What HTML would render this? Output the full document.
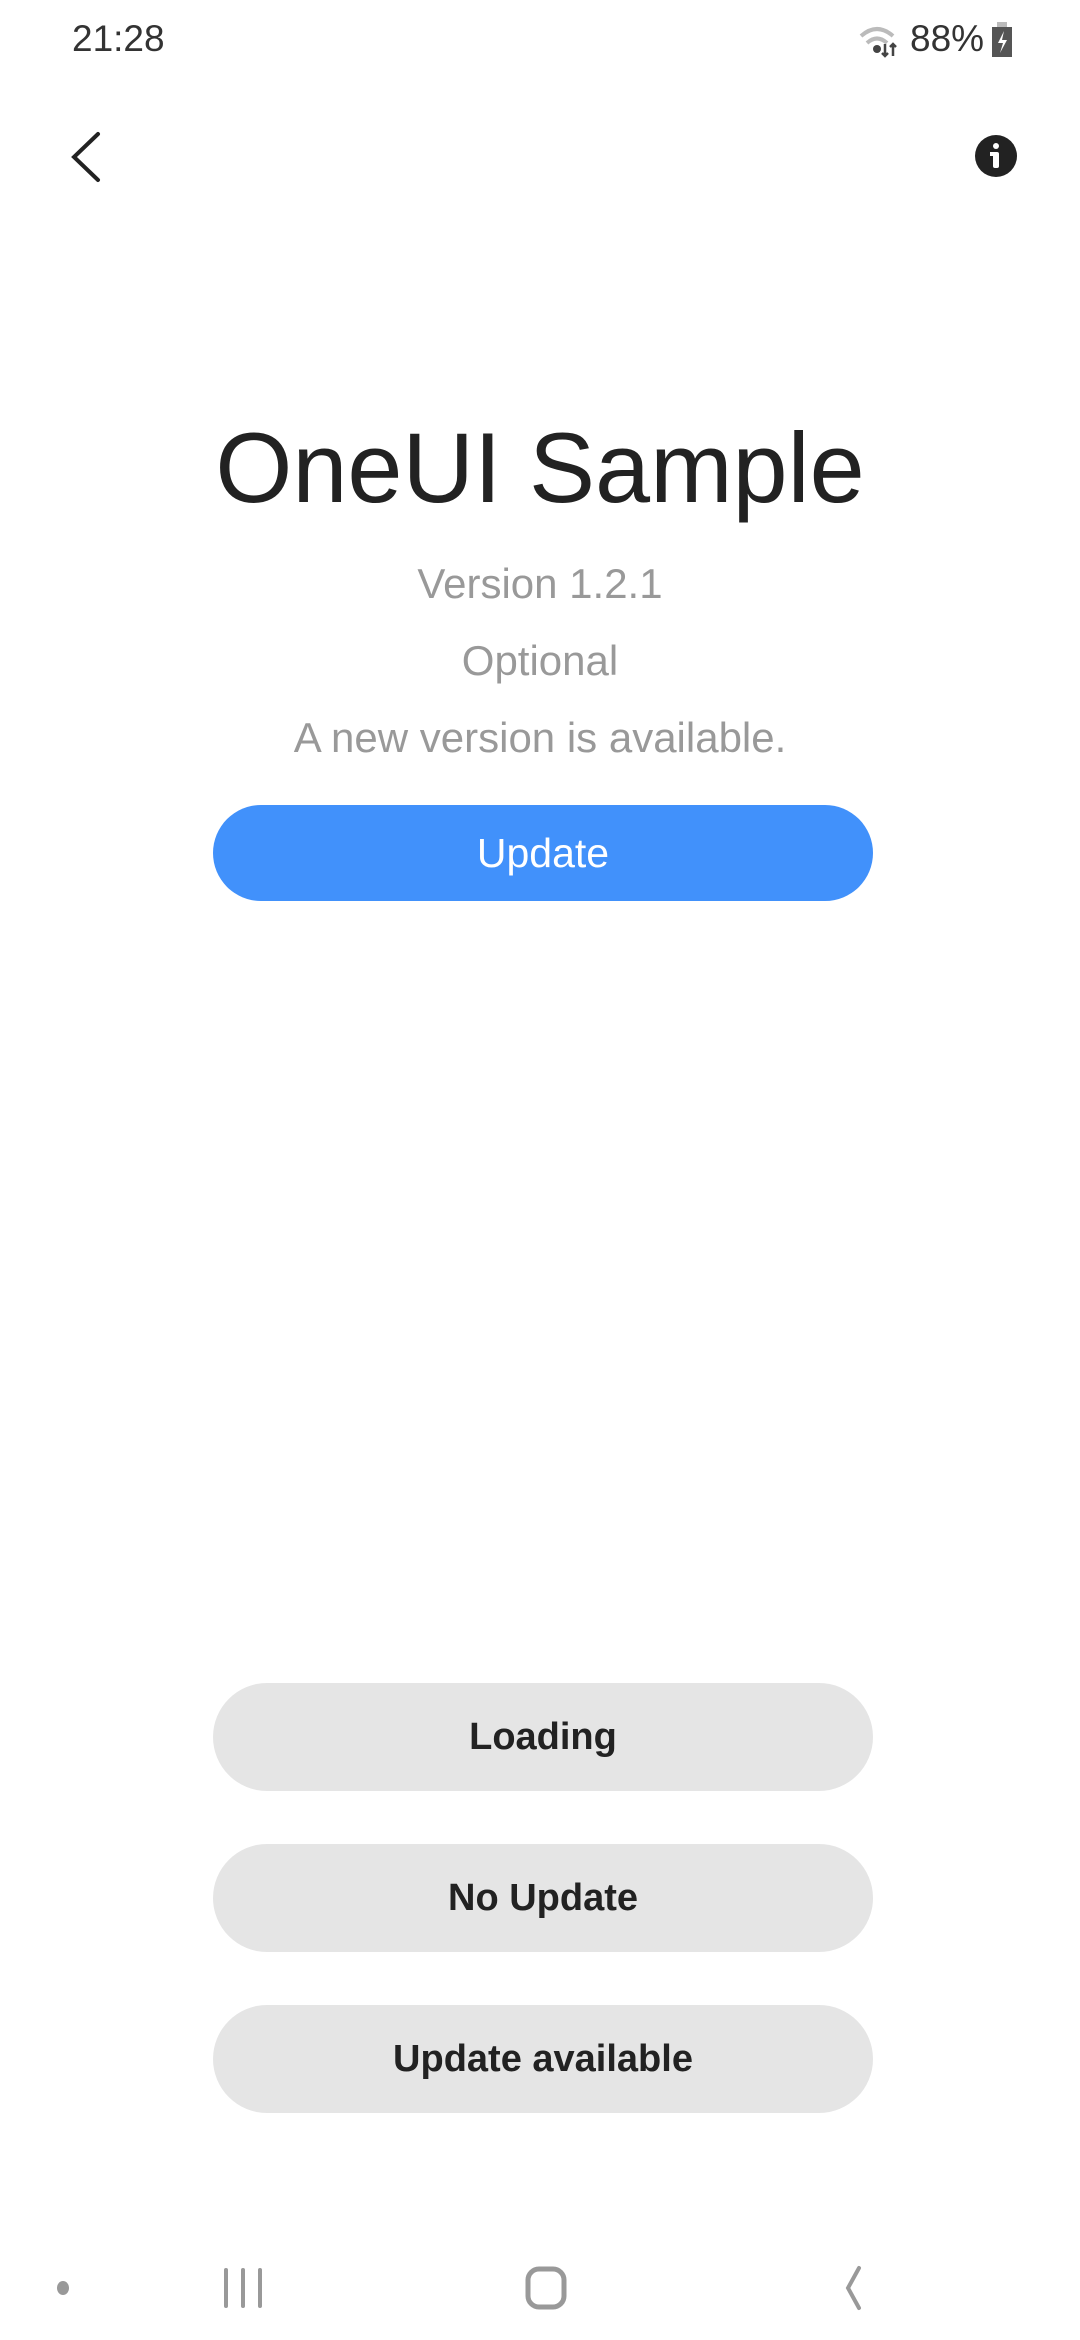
<!DOCTYPE html>
<html><head><style>
body{margin:0;width:1080px;height:2340px;background:#fff;position:relative;font-family:"Liberation Sans",sans-serif;overflow:hidden}
.a{position:absolute}
.c{position:absolute;left:0;width:1080px;text-align:center}
.g{position:absolute;left:213px;width:660px;height:108px;border-radius:54px;background:#e5e5e5;color:#222;font-size:38px;font-weight:bold;text-align:center;line-height:108px}
</style></head><body>
<div class="a" style="left:72px;top:18px;font-size:37px;color:#333">21:28</div>
<div class="a" style="left:910px;top:18px;font-size:37px;color:#333">88%</div>
<svg class="a" style="left:857px;top:24px" width="44" height="34" viewBox="0 0 44 34"><path d="M4 12 Q20 -2 36 12" stroke="#bbb" stroke-width="4" fill="none"/><path d="M10 19 Q20 10 30 19" stroke="#bbb" stroke-width="4" fill="none"/><circle cx="20" cy="25" r="4" fill="#444"/><path d="M28 20v12M25 29l3 3 3-3M36 32V20M33 23l3-3 3 3" stroke="#444" stroke-width="2.5" fill="none"/></svg>
<svg class="a" style="left:990px;top:22px" width="24" height="36" viewBox="0 0 24 36"><rect x="7" y="0" width="10" height="5" fill="#bbb"/><rect x="2" y="5" width="20" height="30" fill="#555"/><path d="M14 9l-6 12h5l-3 10 7-13h-5z" fill="#fff"/></svg>
<svg class="a" style="left:66px;top:130px" width="40" height="54" viewBox="0 0 40 54"><path d="M32 4 L8 27 L32 50" stroke="#222" stroke-width="4" fill="none" stroke-linecap="round"/></svg>
<svg class="a" style="left:974px;top:134px" width="44" height="44" viewBox="0 0 44 44"><circle cx="22" cy="22" r="21" fill="#222"/><circle cx="22" cy="12" r="3" fill="#fff"/><rect x="19" y="18" width="6" height="16" rx="2" fill="#fff"/><rect x="16" y="18" width="6" height="4" fill="#fff"/></svg>
<div class="c" style="top:408px;font-size:99px;color:#222;line-height:120px">OneUI Sample</div>
<div class="c" style="top:560px;font-size:42px;color:#999">Version 1.2.1</div>
<div class="c" style="top:637px;font-size:42px;color:#999">Optional</div>
<div class="c" style="top:714px;font-size:42px;color:#999">A new version is available.</div>
<div class="a" style="left:213px;top:805px;width:660px;height:96px;border-radius:48px;background:#4191fb;color:#fff;font-size:41px;text-align:center;line-height:96px">Update</div>
<div class="g" style="top:1683px">Loading</div>
<div class="g" style="top:1844px">No Update</div>
<div class="g" style="top:2005px">Update available</div>
<svg class="a" style="left:0;top:2250px" width="1080" height="80"><ellipse cx="63" cy="38" rx="6" ry="7" fill="#999"/><g stroke="#999" stroke-width="4" stroke-linecap="round" fill="none"><path d="M226 20v36M243 20v36M260 20v36"/><rect x="528" y="19" width="36" height="38" rx="11" stroke-width="5"/><path d="M859 18 L848 38 L859 58"/></g></svg>
</body></html>
